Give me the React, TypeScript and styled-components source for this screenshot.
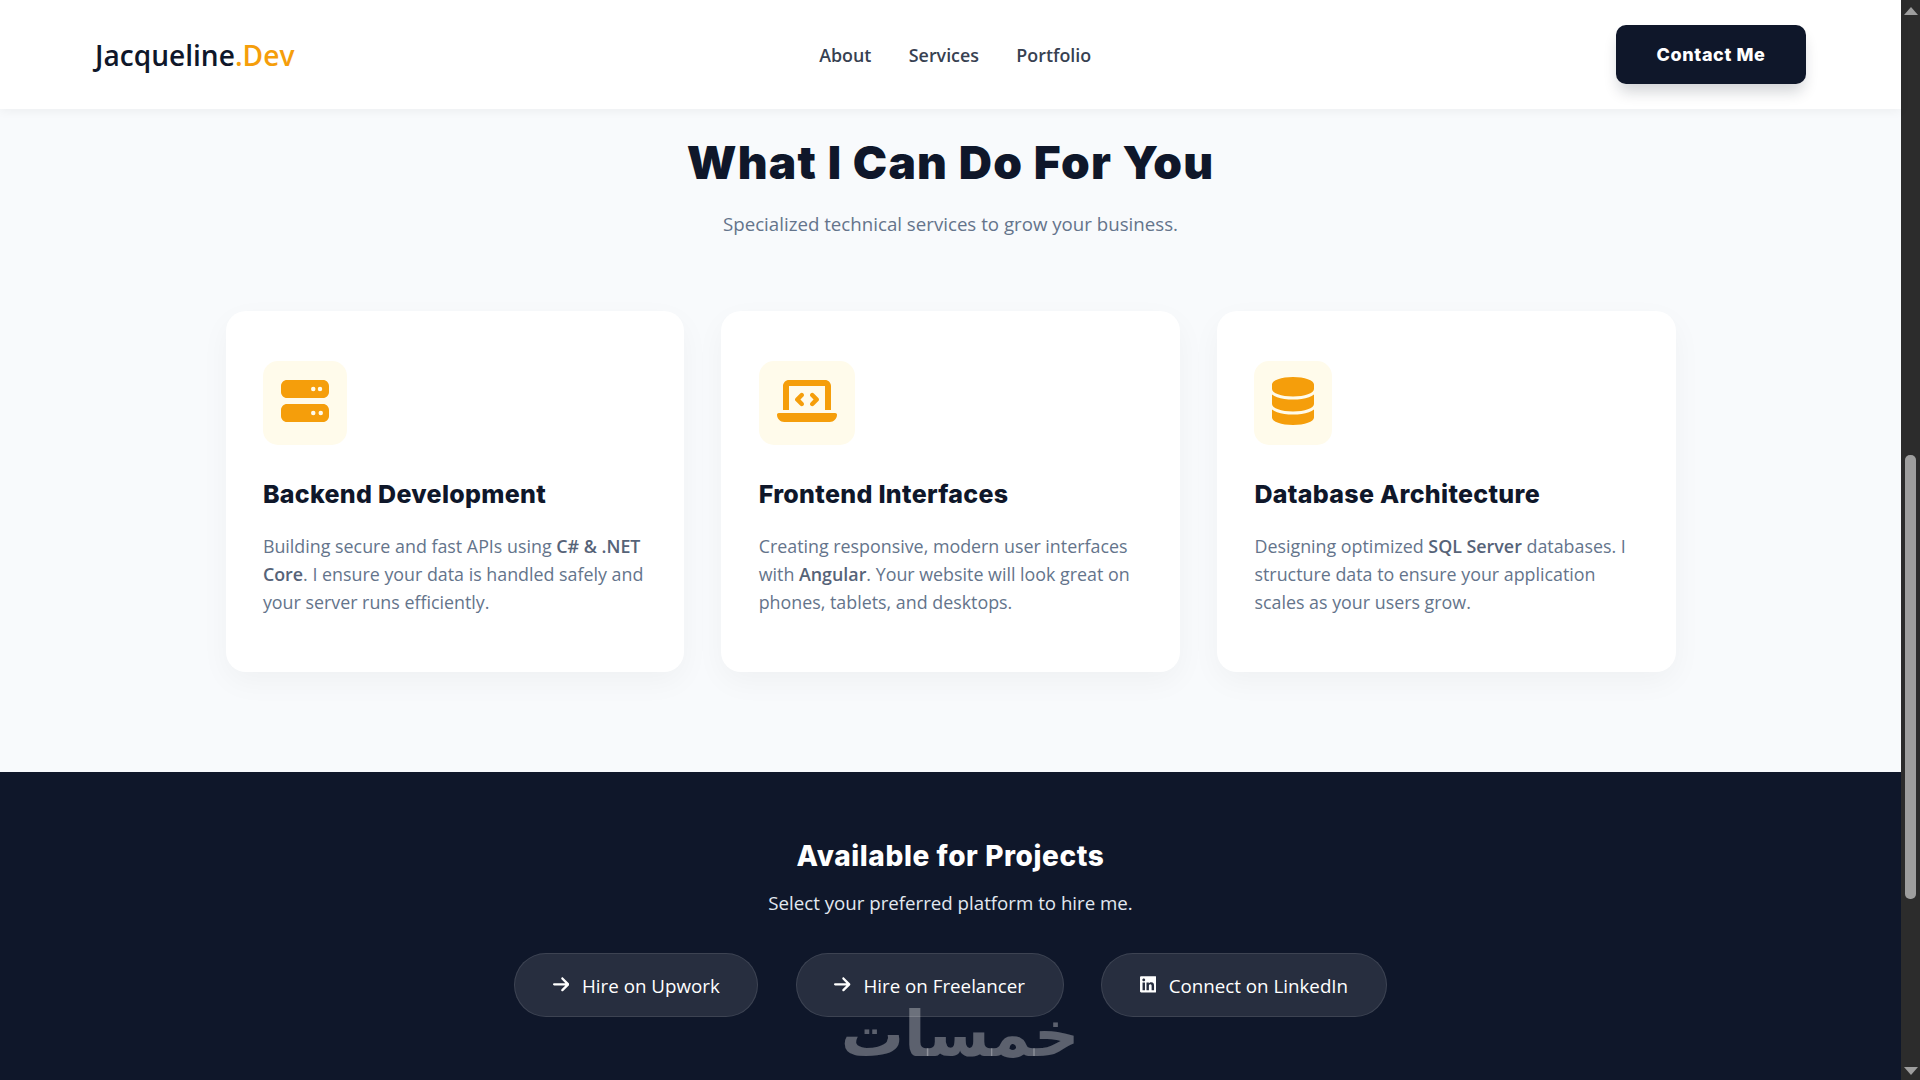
import React from "react";
import styled, { createGlobalStyle } from "styled-components";
import {
  FaArrowRight,
  FaDatabase,
  FaLaptopCode,
  FaLinkedin,
  FaServer,
} from "react-icons/fa6";

const GlobalStyle = createGlobalStyle`
  html, body {
    margin: 0;
    padding: 0;
    height: 100%;
    overflow: hidden;
  }
  body {
    font-family: "Open Sans", "Liberation Sans", sans-serif;
    background: #f8fafc;
  }
  * {
    box-sizing: border-box;
  }
`;

const services = [
  {
    icon: <FaServer />,
    iconWidth: 48,
    title: "Backend Development",
    text: (
      <>
        Building secure and fast APIs using <strong>C# &amp; .NET Core</strong>. I ensure your data
        is handled safely and your server runs efficiently.
      </>
    ),
  },
  {
    icon: <FaLaptopCode />,
    iconWidth: 60,
    title: "Frontend Interfaces",
    text: (
      <>
        Creating responsive, modern user interfaces with <strong>Angular</strong>. Your website will
        look great on phones, tablets, and desktops.
      </>
    ),
  },
  {
    icon: <FaDatabase />,
    iconWidth: 42,
    title: "Database Architecture",
    text: (
      <>
        Designing optimized <strong>SQL Server</strong> databases. I structure data to ensure your
        application scales as your users grow.
      </>
    ),
  },
];

const links = [
  { icon: <FaArrowRight />, label: "Hire on Upwork" },
  { icon: <FaArrowRight />, label: "Hire on Freelancer" },
  { icon: <FaLinkedin />, label: "Connect on LinkedIn" },
];

export default function App() {
  return (
    <Screen>
      <GlobalStyle />
      <Page>
        <Header>
          <Logo>
            Jacqueline<span>.Dev</span>
          </Logo>
          <Nav>
            <NavLink>About</NavLink>
            <NavLink>Services</NavLink>
            <NavLink>Portfolio</NavLink>
          </Nav>
          <ContactButton>Contact Me</ContactButton>
        </Header>

        <Services>
          <Title>What I Can Do For You</Title>
          <Subtitle>Specialized technical services to grow your business.</Subtitle>
          <Grid>
            {services.map((service) => (
              <Card key={service.title}>
                <IconBox $iconWidth={service.iconWidth}>{service.icon}</IconBox>
                <CardTitle>{service.title}</CardTitle>
                <CardText>{service.text}</CardText>
              </Card>
            ))}
          </Grid>
        </Services>

        <Cta>
          <CtaTitle>Available for Projects</CtaTitle>
          <CtaText>Select your preferred platform to hire me.</CtaText>
          <CtaLinks>
            {links.map((link) => (
              <CtaLink key={link.label}>
                {link.icon}
                {link.label}
              </CtaLink>
            ))}
          </CtaLinks>
        </Cta>
      </Page>

      <Scrollbar>
        <ArrowUp />
        <Thumb />
        <ArrowDown />
      </Scrollbar>

      <Watermark dir="rtl">خمسات</Watermark>
    </Screen>
  );
}

const Screen = styled.div`
  position: relative;
  display: flex;
  width: 1920px;
  height: 1080px;
  overflow: hidden;
`;
const Page = styled.div`
  flex: 1;
  min-width: 0;
  display: flex;
  flex-direction: column;
`;
const Header = styled.header`
  position: relative;
  z-index: 2;
  flex: none;
  height: 109px;
  padding: 0 95px;
  display: flex;
  align-items: center;
  justify-content: space-between;
  background: #ffffff;
  box-shadow: 0 2px 10px rgba(0, 0, 0, 0.05);
`;
const Logo = styled.div`
  font-size: 28.1px;
  font-weight: 600;
  color: #0f172a;

  span {
    color: #f59e0b;
  }
`;
const Nav = styled.nav`
  display: flex;
  gap: 37.4px;
`;
const NavLink = styled.a`
  font-size: 17.85px;
  font-weight: 600;
  color: #374151;
`;
const ContactButton = styled.button`
  width: 190px;
  height: 59px;
  border: 0;
  border-radius: 10px;
  background: #0f172a;
  color: #ffffff;
  font-family: Inter, sans-serif;
  font-size: 18px;
  font-weight: 800;
  letter-spacing: 0.6px;
  box-shadow: 0 10px 15px -3px rgba(15, 23, 42, 0.2);
`;
const Services = styled.section`
  flex: none;
  height: 663px;
  padding-top: 28px;
  display: flex;
  flex-direction: column;
  align-items: center;
  background: #f8fafc;
`;
const Title = styled.h2`
  margin: 0;
  font-family: Inter, sans-serif;
  font-size: 46px;
  font-weight: 900;
  line-height: 50px;
  letter-spacing: 1.27px;
  color: #0f172a;
`;
const Subtitle = styled.p`
  margin: 24px 0 0;
  font-size: 18.7px;
  line-height: 26px;
  color: #64748b;
`;
const Grid = styled.div`
  width: 1450px;
  margin-top: 74px;
  display: grid;
  grid-template-columns: repeat(3, 1fr);
  gap: 37.4px;
`;
const Card = styled.article`
  height: 361px;
  padding: 50px 37.4px 0;
  background: #ffffff;
  border-radius: 20px;
  box-shadow: 0 10px 30px rgba(0, 0, 0, 0.04);
`;
const IconBox = styled.div<{ $iconWidth: number }>`
  display: inline-flex;
  padding: 18px;
  border-radius: 15px;
  background: #fffbeb;
  color: #f59e0b;

  svg {
    display: block;
    width: ${(props) => props.$iconWidth}px;
    height: 48px;
    margin: -2px 0 2px;
  }
`;
const CardTitle = styled.h3`
  margin: 32px 0 0;
  font-family: Inter, sans-serif;
  font-size: 25px;
  font-weight: 800;
  line-height: 34px;
  letter-spacing: 0.3px;
  color: #0f172a;
`;
const CardText = styled.p`
  margin: 20.5px 0 0;
  font-size: 17.85px;
  line-height: 28.4px;
  color: #64748b;

  strong {
    font-weight: 600;
    color: #566378;
  }
`;
const Cta = styled.section`
  flex: 1;
  padding-top: 67px;
  display: flex;
  flex-direction: column;
  align-items: center;
  background: #0f172a;
`;
const CtaTitle = styled.h3`
  margin: 0;
  font-family: Inter, sans-serif;
  font-size: 28px;
  font-weight: 800;
  line-height: 34px;
  letter-spacing: 0.6px;
  color: #ffffff;
`;
const CtaText = styled.p`
  margin: 16.5px 0 0;
  font-size: 18.7px;
  line-height: 26px;
  color: #e2e8f0;
`;
const CtaLinks = styled.div`
  margin-top: 37.5px;
  display: flex;
  gap: 37.4px;
`;
const CtaLink = styled.a`
  height: 64px;
  padding: 0 37.6px;
  display: inline-flex;
  align-items: center;
  gap: 12.75px;
  border: 1px solid rgba(255, 255, 255, 0.1);
  border-radius: 32px;
  background: rgba(255, 255, 255, 0.1);
  color: #ffffff;
  font-size: 18.75px;
  font-weight: 500;

  svg {
    width: 16.4px;
    height: 18.7px;
    margin: -1px 0 1px;
  }
`;
const Scrollbar = styled.aside`
  flex: none;
  width: 19px;
  padding: 7px 0 5px;
  display: flex;
  flex-direction: column;
  align-items: center;
  background: #2c2c2c;
`;
const ArrowUp = styled.div`
  width: 0;
  height: 0;
  border-left: 7px solid transparent;
  border-right: 7px solid transparent;
  border-bottom: 8px solid #9e9e9e;
`;
const Thumb = styled.div`
  width: 11px;
  height: 444px;
  margin-top: 440px;
  border-radius: 5px;
  background: #9e9e9e;
`;
const ArrowDown = styled.div`
  width: 0;
  height: 0;
  margin-top: auto;
  border-left: 7px solid transparent;
  border-right: 7px solid transparent;
  border-top: 8px solid #9e9e9e;
`;
const Watermark = styled.div`
  position: absolute;
  left: 830px;
  top: 995px;
  width: 260px;
  text-align: center;
  font-family: "DejaVu Sans", sans-serif;
  font-size: 63px;
  font-weight: 700;
  line-height: 80px;
  color: rgba(255, 255, 255, 0.32);
  pointer-events: none;
`;
